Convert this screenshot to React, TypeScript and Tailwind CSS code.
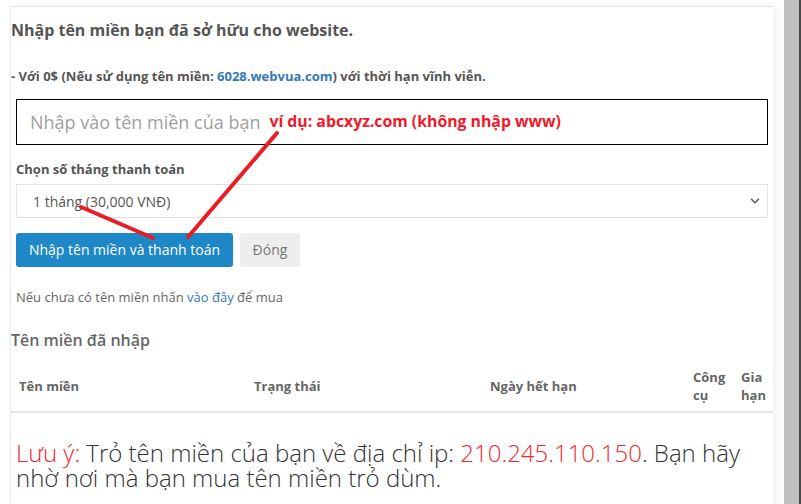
import { ChevronDown } from "lucide-react";

const font = { fontFamily: '"Open Sans", "Liberation Sans", sans-serif' };

function HeaderCell({ children }: { children: React.ReactNode }) {
  return (
    <div className="pl-2 pr-1 flex items-center text-[13px] font-bold leading-[18px] text-[#666]">
      {children}
    </div>
  );
}

export default function App() {
  return (
    <div className="relative flex w-[801px] h-[504px] overflow-hidden bg-white" style={font}>
      <div className="pl-[10px] pt-[6px]">
        <div className="w-[763px] h-[520px] border-l border-t border-[#e8e8e8] bg-white shadow-[4px_0_8px_rgba(0,0,0,0.06)]">
          <h2 className="pt-[12px] text-[16px] font-bold leading-[22px] text-[#555]">
            Nhập tên miền bạn đã sở hữu cho website.
          </h2>
          <p className="mt-[26px] text-[13px] font-bold leading-[18px] text-[#555]">
            - Với 0$ (Nếu sử dụng tên miền: <a className="text-[#337ab7]">6028.webvua.com</a>) với thời hạn vĩnh viễn.
          </p>

          <div className="px-[5px]">
            <div className="mt-[14px] h-[46px] border border-black flex items-center pl-[13px]">
              <span className="text-[18px] text-[#a0a0a0]">Nhập vào tên miền của bạn</span>
              <span className="ml-[9px] text-[15.8px] font-bold text-[#f0192a]">ví dụ: abcxyz.com (không nhập www)</span>
            </div>

            <label className="block mt-[15px] text-[13px] font-bold leading-[18px] text-[#555]">
              Chọn số tháng thanh toán
            </label>
            <div className="mt-[6px] w-[752px] h-[34px] border border-[#e3e3e3] flex items-center justify-between pl-[16px] pr-[5px]">
              <span className="text-[14px] text-[#555]">1 tháng (30,000 VNĐ)</span>
              <ChevronDown className="w-[14px] h-[14px] text-[#666]" strokeWidth={3} />
            </div>

            <div className="mt-[15px] flex gap-[7px]">
              <button className="h-[34px] w-[217px] rounded-[3px] bg-[#1e87c8] pb-[2px] text-[14px] text-white">
                Nhập tên miền và thanh toán
              </button>
              <button className="h-[34px] w-[60px] rounded-[3px] bg-[#eeeeee] pb-[2px] text-[14px] text-[#777]">
                Đóng
              </button>
            </div>

            <p className="mt-[21px] text-[13px] leading-[18px] text-[#666]">
              Nếu chưa có tên miền nhấn <a className="text-[#337ab7]">vào đây</a> để mua
            </p>
          </div>

          <h3 className="mt-[23px] text-[16px] font-semibold leading-[22px] text-[#666]">Tên miền đã nhập</h3>

          <div className="mt-[10px] h-[52px] grid grid-cols-[235px_236px_203px_48px_1fr] border-b-2 border-[#e3e3e3]">
            <HeaderCell>Tên miền</HeaderCell>
            <HeaderCell>Trạng thái</HeaderCell>
            <HeaderCell>Ngày hết hạn</HeaderCell>
            <HeaderCell>Công cụ</HeaderCell>
            <HeaderCell>Gia hạn</HeaderCell>
          </div>

          <p className="mt-[27px] ml-[5px] w-[745px] text-[24px] font-light leading-[25px] text-[#333]">
            <span className="text-[#f5262e]">Lưu ý:</span> Trỏ tên miền của bạn về địa chỉ ip:{" "}
            <span className="text-[#f5262e]">210.245.110.150</span>. Bạn hãy nhờ nơi mà bạn mua tên miền trỏ dùm.
          </p>
        </div>
      </div>

      <div className="ml-auto flex">
        <div className="w-[15px] h-full bg-[#c1c1c1]" />
        <div className="w-[2px] h-full bg-[#4a4a4a]" />
      </div>

      {/* annotation arrows */}
      <svg className="absolute left-0 top-0 pointer-events-none" width="801" height="504">
        <line x1="277" y1="133" x2="188" y2="237" stroke="#ec1c24" strokeWidth="4" strokeLinecap="round" />
        <line x1="81" y1="207" x2="153" y2="238" stroke="#ec1c24" strokeWidth="4" strokeLinecap="round" />
      </svg>
    </div>
  );
}
